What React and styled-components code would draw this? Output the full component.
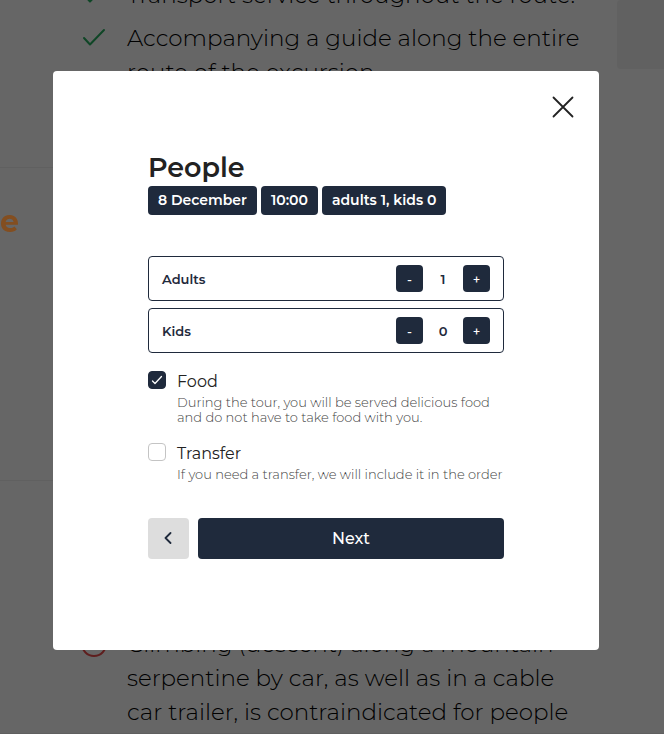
import React, { useState } from "react";
import styled, { createGlobalStyle } from "styled-components";

const navy = "#1f2a3c";

const Global = createGlobalStyle`
  *, *::before, *::after { box-sizing: border-box; }
  body { margin: 0; background: #fff; color: #222; font-family: Montserrat, Inter, sans-serif; }
  button, input { font: inherit; }
  h2, p, ul { margin: 0; padding: 0; }
`;

const Page = styled.main`
  height: 100vh;
  overflow: hidden;
  display: flex;
  gap: 20px;
  border-bottom: 1px solid #eee;
`;

const Content = styled.div`
  flex: 1;
  min-width: 0;
  display: grid;
  grid-template-rows: 168px 313px 1fr;
`;

const Section = styled.section`
  display: flex;
  align-items: ${(p) => p.$align || "flex-start"};
  min-height: 0;
  border-bottom: 1px solid #f0f0f0;
  &:last-child { border-bottom: 0; }
`;

const SectionName = styled.h2`
  position: relative;
  z-index: 2;
  padding-top: 36px;
  font-size: 30px;
  line-height: 36px;
  font-weight: 700;
  color: #834e20;
`;

const List = styled.ul`
  list-style: none;
  display: flex;
  flex-direction: column;
  gap: 9px;
  width: 500px;
  margin-top: ${(p) => (p.$scrolled ? "-22px" : "0")};
  margin-left: 81px;
  padding-bottom: 4px;
`;

const Item = styled.li`
  display: grid;
  grid-template-columns: 26px 1fr;
  column-gap: 20px;
  color: #000;
  font-size: 23px;
  font-weight: 300;
  line-height: 34px;
  svg { margin-top: 4px; }
`;

const Aside = styled.aside`
  width: 47px;
  height: 69px;
  background: #f2f2f2;
  border-radius: 4px 0 0 4px;
`;

const Overlay = styled.div`
  position: fixed;
  inset: 0;
  z-index: 1;
  display: flex;
  align-items: center;
  justify-content: center;
  padding: 0 65px 13px 53px;
  background: rgba(0, 0, 0, 0.6);
`;

const Dialog = styled.div`
  width: 100%;
  max-width: 546px;
  padding: 20px 20px 91px;
  background: #fff;
  border-radius: 4px;
`;

const Top = styled.div`
  display: flex;
  justify-content: flex-end;
`;

const Close = styled.button`
  display: grid;
  place-items: center;
  width: 32px;
  height: 32px;
  padding: 0;
  border: 0;
  background: none;
  color: #222;
`;

const Form = styled.form`
  padding: 28px 75px 0;
`;

const Title = styled.h2`
  font-size: 27px;
  line-height: 34px;
  font-weight: 600;
`;

const Tags = styled.div`
  display: flex;
  gap: 4px;
  margin: 1px 0 41px;
`;

const Tag = styled.span`
  padding: 0 10px;
  border-radius: 4px;
  background: ${navy};
  color: #fff;
  font-size: 14px;
  line-height: 29px;
  font-weight: 600;
  white-space: nowrap;
`;

const Counters = styled.div`
  display: grid;
  gap: 7px;
`;

const Counter = styled.div`
  display: flex;
  align-items: center;
  justify-content: space-between;
  height: 45px;
  padding: 0 13px;
  border: 1px solid ${navy};
  border-radius: 4px;
  color: ${navy};
  font-size: 13px;
  font-weight: 600;
`;

const Stepper = styled.div`
  display: grid;
  grid-template-columns: 27px 40px 27px;
  align-items: center;
  text-align: center;
`;

const Step = styled.button`
  height: 27px;
  padding: 0;
  border: 0;
  border-radius: 4px;
  background: ${navy};
  color: #fff;
  font-weight: 500;
`;

const Options = styled.div`
  display: grid;
  gap: 18px;
  margin: 18px 0 36px;
`;

const Option = styled.label`
  display: grid;
  grid-template-columns: 18px 1fr;
  column-gap: 11px;
`;

const BoxWrap = styled.span`
  display: grid;
  height: 18px;
  > * { grid-area: 1 / 1; place-self: center; }
  svg { pointer-events: none; }
`;

const Check = styled.input`
  appearance: none;
  width: 18px;
  height: 18px;
  margin: 0;
  border: 1px solid #c4c4c4;
  border-radius: 4px;
  background: #fff;
  &:checked { background: ${navy}; border-color: ${navy}; }
`;

const OptionName = styled.span`
  display: block;
  margin-bottom: 2px;
  font-size: 16px;
  line-height: 22px;
`;

const OptionText = styled.span`
  display: block;
  color: #444;
  font-size: 13px;
  font-weight: 300;
  line-height: 15px;
`;

const Actions = styled.div`
  display: grid;
  grid-template-columns: 41px 1fr;
  gap: 9px;
`;

const Action = styled.button`
  display: grid;
  place-items: center;
  height: 41px;
  padding: 0;
  border: 0;
  border-radius: 4px;
  background: ${(p) => (p.$primary ? navy : "#ddd")};
  color: ${(p) => (p.$primary ? "#fff" : navy)};
  font-size: 16px;
  font-weight: 500;
`;

const Tick = () => (
  <svg width="26" height="26" viewBox="0 0 26 26" fill="none" stroke="#27ae60" strokeWidth="2" strokeLinecap="round" strokeLinejoin="round" aria-hidden="true">
    <path d="M3 13L9 19.5L23 5" />
  </svg>
);

const Ring = () => (
  <svg width="26" height="26" viewBox="0 0 26 26" fill="none" stroke="#eb4b4b" strokeWidth="2" aria-hidden="true">
    <circle cx="13" cy="13" r="12" />
  </svg>
);

function CounterRow({ label, value, onChange }) {
  return (
    <Counter role="group" aria-label={label}>
      <span>{label}</span>
      <Stepper>
        <Step type="button" aria-label={`Fewer ${label}`} onClick={() => onChange(Math.max(0, value - 1))}>-</Step>
        <output>{value}</output>
        <Step type="button" aria-label={`More ${label}`} onClick={() => onChange(value + 1)}>+</Step>
      </Stepper>
    </Counter>
  );
}

function OptionRow({ name, text, checked, onChange }) {
  return (
    <Option>
      <BoxWrap>
        <Check type="checkbox" checked={checked} onChange={(e) => onChange(e.target.checked)} />
        {checked && (
          <svg width="18" height="18" viewBox="0 0 18 18" fill="none" stroke="#fff" strokeWidth="1.3" strokeLinecap="round" strokeLinejoin="round" aria-hidden="true">
            <path d="M4.5 10L7 12.5L13.5 5.5" />
          </svg>
        )}
      </BoxWrap>
      <span>
        <OptionName>{name}</OptionName>
        <OptionText>{text}</OptionText>
      </span>
    </Option>
  );
}

export default function App() {
  const [adults, setAdults] = useState(1);
  const [kids, setKids] = useState(0);
  const [food, setFood] = useState(true);
  const [transfer, setTransfer] = useState(false);

  return (
    <>
      <Global />
      <Page>
        <Content>
          <Section>
            <List $scrolled>
              <Item><Tick /><span>Transport service throughout the route.</span></Item>
              <Item><Tick /><span>Accompanying a guide along the entire route of the excursion</span></Item>
            </List>
          </Section>
          <Section>
            <SectionName>e</SectionName>
          </Section>
          <Section $align="flex-end">
            <List>
              <Item><Ring /><span>Climbing (descent) along a mountain serpentine by car, as well as in a cable car trailer, is contraindicated for people</span></Item>
            </List>
          </Section>
        </Content>
        <Aside />
      </Page>
      <Overlay>
        <Dialog role="dialog" aria-modal="true" aria-labelledby="people-title">
          <Top>
            <Close type="button" aria-label="Close">
              <svg width="22" height="22" viewBox="0 0 22 22" fill="none" stroke="currentColor" strokeWidth="1.8" strokeLinecap="round" aria-hidden="true">
                <path d="M1.5 1.5L20.5 20.5M20.5 1.5L1.5 20.5" />
              </svg>
            </Close>
          </Top>
          <Form onSubmit={(e) => e.preventDefault()}>
            <Title id="people-title">People</Title>
            <Tags>
              <Tag>8 December</Tag>
              <Tag>10:00</Tag>
              <Tag>adults {adults}, kids {kids}</Tag>
            </Tags>
            <Counters>
              <CounterRow label="Adults" value={adults} onChange={setAdults} />
              <CounterRow label="Kids" value={kids} onChange={setKids} />
            </Counters>
            <Options>
              <OptionRow name="Food" text="During the tour, you will be served delicious food and do not have to take food with you." checked={food} onChange={setFood} />
              <OptionRow name="Transfer" text="If you need a transfer, we will include it in the order" checked={transfer} onChange={setTransfer} />
            </Options>
            <Actions>
              <Action type="button" aria-label="Back">
                <svg width="12" height="14" viewBox="0 0 12 14" fill="none" stroke="currentColor" strokeWidth="1.8" strokeLinecap="round" strokeLinejoin="round" aria-hidden="true">
                  <path d="M7.5 1L2.5 6L7.5 11" />
                </svg>
              </Action>
              <Action type="submit" $primary>Next</Action>
            </Actions>
          </Form>
        </Dialog>
      </Overlay>
    </>
  );
}
